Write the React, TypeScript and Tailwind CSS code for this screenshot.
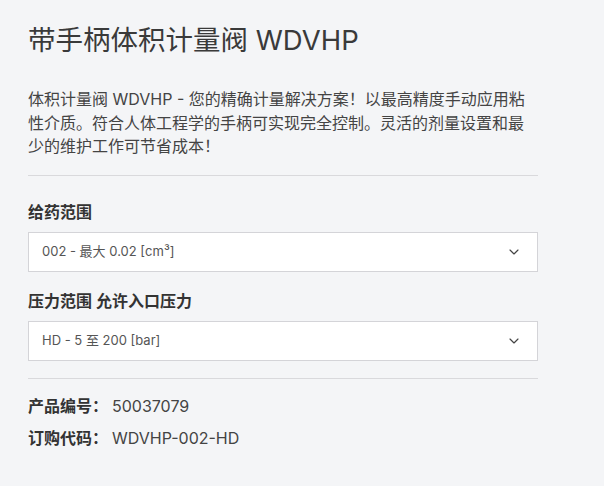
import { ChevronDown } from "lucide-react";

const font = "font-['Inter','Noto_Sans_CJK_SC',sans-serif]";

function Select({ label, value }: { label: string; value: string }) {
  return (
    <div className="flex flex-col">
      <div className="text-[16px] font-semibold text-[#333] leading-[22px]">{label}</div>
      <div className="mt-[9px] flex h-10 items-center justify-between border border-[#d4d4d8] bg-white pl-[13px] pr-[15px]">
        <span className="text-[13px] text-[#555]">{value}</span>
        <ChevronDown size={16} strokeWidth={1.75} className="text-[#444]" />
      </div>
    </div>
  );
}

export default function App() {
  return (
    <div className={`min-h-[486px] w-full bg-[#f4f5f7] ${font}`}>
      <div className="w-[538px] pl-[28px] pt-[22px]">
        <h1 className="text-[27.5px] font-normal leading-9 text-[#3a3a3a]">带手柄体积计量阀 WDVHP</h1>

        <p className="mt-[30px] text-[16px] leading-[23.5px] text-[#444]">
          体积计量阀 WDVHP - 您的精确计量解决方案！以最高精度手动应用粘性介质。符合人体工程学的手柄可实现完全控制。灵活的剂量设置和最少的维护工作可节省成本！
        </p>

        <div className="mt-[16px] h-px bg-[#d9d9dc]" />

        <div className="mt-[25px] flex flex-col gap-[18px]">
          <Select label="给药范围" value="002 - 最大 0.02 [cm³]" />
          <Select label="压力范围 允许入口压力" value="HD - 5 至 200 [bar]" />
        </div>

        <div className="mt-[17px] h-px bg-[#d9d9dc]" />

        <div className="mt-[16px] flex flex-col gap-[10px] text-[16px] leading-[22px]">
          <div className="flex items-center">
            <span className="w-[84px] font-semibold text-[#333]">产品编号：</span>
            <span className="text-[#444]">50037079</span>
          </div>
          <div className="flex items-center">
            <span className="w-[84px] font-semibold text-[#333]">订购代码：</span>
            <span className="text-[#444]">WDVHP-002-HD</span>
          </div>
        </div>
      </div>
    </div>
  );
}
